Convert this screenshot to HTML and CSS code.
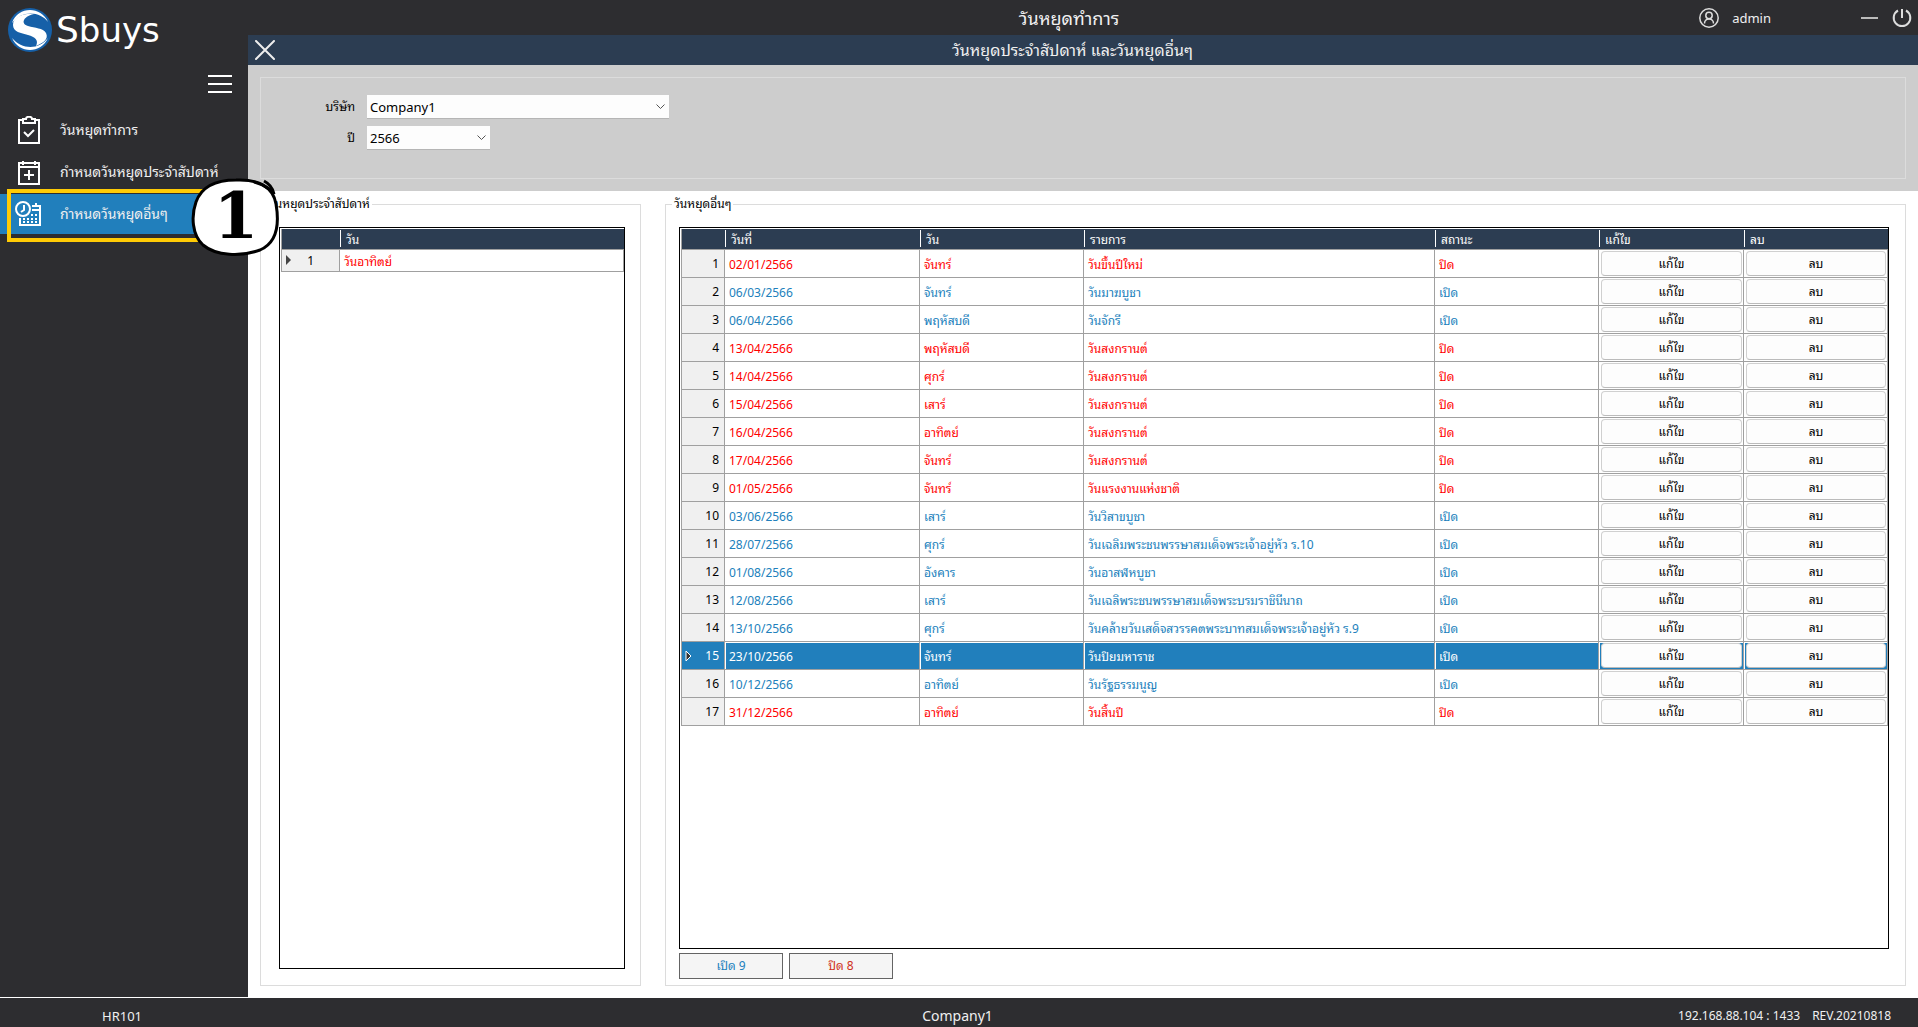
FILE: index.html
```html
<!DOCTYPE html>
<html lang="th">
<head>
<meta charset="utf-8">
<title>วันหยุดทำการ</title>
<link rel="stylesheet" href="styles.css">
</head>
<body>
<div class="app">
  <aside class="sidebar">
    <div class="logo">
      <svg class="logo-mark" viewBox="0 0 44 44" aria-hidden="true">
        <circle cx="22" cy="22" r="22" fill="#1660a8"/>
        <path d="M4 15C10 -2 33 -2 40 14C32 3 14 2 4 15Z" fill="#fff"/>
        <path d="M4 30C11 46 33 46 40 30C31 42 14 42 4 30Z" fill="#fff"/>
        <path d="M26 6C15 5 5 9 5 17C5 24 13 25 20 27C27 29 31 32 28 38C35 35 41 31 38 25C35 20 27 20 20 18C13 16 14 9 26 6Z" fill="#fff"/>
      </svg>
      <span class="wordmark"><span class="wordmark-cap">S</span>buys</span>
    </div>
    <button class="icon-button menu-toggle" aria-label="เมนู">
      <svg width="24" height="18" viewBox="0 0 24 18"><path d="M0 1H24M0 9H24M0 17H24" stroke="#fff" stroke-width="2"/></svg>
    </button>
    <nav class="nav">
      <a class="nav-item" href="#holidays">
        <svg class="nav-icon" viewBox="0 0 28 28" fill="none" stroke="#fff" stroke-width="2">
          <path d="M8 4H4V27H24V4H20M8 3V7H20V3H17C17 0 11 0 11 3Z"/><path d="M9 16L13 20L19 14"/>
        </svg>
        <span>วันหยุดทำการ</span>
      </a>
      <a class="nav-item" href="#weekly">
        <svg class="nav-icon" viewBox="0 0 28 28" fill="none" stroke="#fff" stroke-width="2">
          <path d="M4 5H24V26H4ZM4 9H24M8 3V7M20 3V7M14 12V22M9 17H19"/>
        </svg>
        <span>กำหนดวันหยุดประจำสัปดาห์</span>
      </a>
      <a class="nav-item nav-item-active" href="#others" aria-current="page">
        <svg class="nav-icon" viewBox="0 0 28 28" fill="none" stroke="#fff" stroke-width="2">
          <circle cx="8" cy="9" r="7"/><path d="M9 5V10L6 12"/><path d="M17 6H25V25H5V18M17 10H25M21 3V7"/>
          <path d="M16 15H23M8 19H23M8 22H23" stroke-dasharray="2 2"/>
        </svg>
        <span>กำหนดวันหยุดอื่นๆ</span>
      </a>
      <div class="callout">
        <svg class="callout-ring" viewBox="0 0 90 80" aria-hidden="true">
          <path d="M45 3C66 2 82 9 85 27C89 50 85 66 69 73C50 80 25 79 12 68C1 58 0 39 5 25C11 8 27 3 45 3Z" fill="#fff" stroke="#000" stroke-width="3"/>
          <path d="M73 4C79 7 82 12 83 17C78 10 70 7 63 5" fill="none" stroke="#000" stroke-width="3"/>
        </svg>
        <span class="callout-number">1</span>
      </div>
    </nav>
  </aside>

  <header class="topbar">
    <h1 class="topbar-title">วันหยุดทำการ</h1>
    <div class="topbar-tools">
      <svg width="20" height="20" viewBox="0 0 20 20" fill="none" stroke="#ddd" stroke-width="1.5">
        <circle cx="10" cy="10" r="9.2"/><circle cx="10" cy="7.500" r="3.200"/><path d="M5.500 15.500C5.500 9.500 14.500 9.500 14.500 15.500"/>
      </svg>
      <span class="user-name">admin</span>
      <button class="icon-button" aria-label="ย่อ"><svg width="18" height="20" viewBox="0 0 18 20"><path d="M0 10H17" stroke="#bbb" stroke-width="2"/></svg></button>
      <button class="icon-button" aria-label="ออก"><svg width="20" height="20" viewBox="0 0 20 20" fill="none" stroke="#ddd" stroke-width="2"><path d="M6 2.500A8.300 8.300 0 1 0 14 2.500M10 1V10"/></svg></button>
    </div>
  </header>

  <main class="page">
    <div class="page-bar">
      <button class="icon-button" aria-label="ปิดหน้าต่าง"><svg width="20" height="20" viewBox="0 0 20 20"><path d="M1 1L19 19M19 1L1 19" stroke="#eee" stroke-width="2" stroke-linecap="round"/></svg></button>
      <h2 class="page-title">วันหยุดประจำสัปดาห์ และวันหยุดอื่นๆ</h2>
    </div>

    <div class="filters">
      <div class="filter-box">
        <label class="filter-label" for="company">บริษัท</label>
        <select class="select select-wide" id="company"><option>Company1</option></select>
        <label class="filter-label" for="year">ปี</label>
        <select class="select select-narrow" id="year"><option>2566</option></select>
      </div>
    </div>

    <div class="panels">
      <fieldset class="panel panel-weekly">
        <legend class="legend">วันหยุดประจำสัปดาห์</legend>
        <div class="grid-frame">
          <table class="grid grid-weekly">
            <colgroup><col class="col-index-wide"><col></colgroup>
            <thead><tr><th></th><th>วัน</th></tr></thead>
            <tbody><tr class="closed"><td class="index index-marked"><svg class="marker" viewBox="0 0 7 12"><path d="M1 1L6 6L1 11Z" fill="#444"/></svg>1</td><td>วันอาทิตย์</td></tr></tbody>
          </table>
        </div>
      </fieldset>

      <fieldset class="panel panel-others">
        <legend class="legend">วันหยุดอื่นๆ</legend>
        <div class="grid-frame">
          <table class="grid">
            <colgroup><col class="col-index"><col class="col-date"><col class="col-day"><col><col class="col-status"><col class="col-edit"><col class="col-delete"></colgroup>
            <thead><tr><th></th><th>วันที่</th><th>วัน</th><th>รายการ</th><th>สถานะ</th><th>แก้ไข</th><th>ลบ</th></tr></thead>
            <tbody>
              <tr class="closed"><td class="index">1</td><td>02/01/2566</td><td>จันทร์</td><td>วันขึ้นปีใหม่</td><td>ปิด</td><td class="action"><button>แก้ไข</button></td><td class="action"><button>ลบ</button></td></tr>
              <tr class="open"><td class="index">2</td><td>06/03/2566</td><td>จันทร์</td><td>วันมาฆบูชา</td><td>เปิด</td><td class="action"><button>แก้ไข</button></td><td class="action"><button>ลบ</button></td></tr>
              <tr class="open"><td class="index">3</td><td>06/04/2566</td><td>พฤหัสบดี</td><td>วันจักรี</td><td>เปิด</td><td class="action"><button>แก้ไข</button></td><td class="action"><button>ลบ</button></td></tr>
              <tr class="closed"><td class="index">4</td><td>13/04/2566</td><td>พฤหัสบดี</td><td>วันสงกรานต์</td><td>ปิด</td><td class="action"><button>แก้ไข</button></td><td class="action"><button>ลบ</button></td></tr>
              <tr class="closed"><td class="index">5</td><td>14/04/2566</td><td>ศุกร์</td><td>วันสงกรานต์</td><td>ปิด</td><td class="action"><button>แก้ไข</button></td><td class="action"><button>ลบ</button></td></tr>
              <tr class="closed"><td class="index">6</td><td>15/04/2566</td><td>เสาร์</td><td>วันสงกรานต์</td><td>ปิด</td><td class="action"><button>แก้ไข</button></td><td class="action"><button>ลบ</button></td></tr>
              <tr class="closed"><td class="index">7</td><td>16/04/2566</td><td>อาทิตย์</td><td>วันสงกรานต์</td><td>ปิด</td><td class="action"><button>แก้ไข</button></td><td class="action"><button>ลบ</button></td></tr>
              <tr class="closed"><td class="index">8</td><td>17/04/2566</td><td>จันทร์</td><td>วันสงกรานต์</td><td>ปิด</td><td class="action"><button>แก้ไข</button></td><td class="action"><button>ลบ</button></td></tr>
              <tr class="closed"><td class="index">9</td><td>01/05/2566</td><td>จันทร์</td><td>วันแรงงานแห่งชาติ</td><td>ปิด</td><td class="action"><button>แก้ไข</button></td><td class="action"><button>ลบ</button></td></tr>
              <tr class="open"><td class="index">10</td><td>03/06/2566</td><td>เสาร์</td><td>วันวิสาขบูชา</td><td>เปิด</td><td class="action"><button>แก้ไข</button></td><td class="action"><button>ลบ</button></td></tr>
              <tr class="open"><td class="index">11</td><td>28/07/2566</td><td>ศุกร์</td><td>วันเฉลิมพระชนพรรษาสมเด็จพระเจ้าอยู่หัว ร.10</td><td>เปิด</td><td class="action"><button>แก้ไข</button></td><td class="action"><button>ลบ</button></td></tr>
              <tr class="open"><td class="index">12</td><td>01/08/2566</td><td>อังคาร</td><td>วันอาสฬหบูชา</td><td>เปิด</td><td class="action"><button>แก้ไข</button></td><td class="action"><button>ลบ</button></td></tr>
              <tr class="open"><td class="index">13</td><td>12/08/2566</td><td>เสาร์</td><td>วันเฉลิพระชนพรรษาสมเด็จพระบรมราชินีนาถ</td><td>เปิด</td><td class="action"><button>แก้ไข</button></td><td class="action"><button>ลบ</button></td></tr>
              <tr class="open"><td class="index">14</td><td>13/10/2566</td><td>ศุกร์</td><td>วันคล้ายวันเสด็จสวรรคตพระบาทสมเด็จพระเจ้าอยู่หัว ร.9</td><td>เปิด</td><td class="action"><button>แก้ไข</button></td><td class="action"><button>ลบ</button></td></tr>
              <tr class="selected"><td class="index"><svg class="marker" viewBox="0 0 7 12"><path d="M1 1L6 6L1 11Z" fill="#333" stroke="#fff"/></svg>15</td><td>23/10/2566</td><td>จันทร์</td><td>วันปิยมหาราช</td><td>เปิด</td><td class="action"><button>แก้ไข</button></td><td class="action"><button>ลบ</button></td></tr>
              <tr class="open"><td class="index">16</td><td>10/12/2566</td><td>อาทิตย์</td><td>วันรัฐธรรมนูญ</td><td>เปิด</td><td class="action"><button>แก้ไข</button></td><td class="action"><button>ลบ</button></td></tr>
              <tr class="closed"><td class="index">17</td><td>31/12/2566</td><td>อาทิตย์</td><td>วันสิ้นปี</td><td>ปิด</td><td class="action"><button>แก้ไข</button></td><td class="action"><button>ลบ</button></td></tr>
            </tbody>
          </table>
        </div>
        <div class="totals">
          <button class="total total-open">เปิด 9</button>
          <button class="total total-closed">ปิด 8</button>
        </div>
      </fieldset>
    </div>
  </main>

  <footer class="statusbar">
    <span class="status-code">HR101</span>
    <span class="status-company">Company1</span>
    <span class="status-info"><span>192.168.88.104 : 1433</span><span>REV.20210818</span></span>
  </footer>
</div>
</body>
</html>
```
FILE: styles.css
```css
* {
  box-sizing: border-box;
}

body {
  margin: 0;
  font-family: "Noto Sans", "Noto Sans Thai Looped", "Loma", "Garuda", "Waree", "Noto Sans Thai", sans-serif;
  font-size: 12px;
  line-height: 18px;
  color: #000;
  background: #2d2d30;
}

button,
select {
  font: inherit;
  color: inherit;
}

.app {
  display: grid;
  grid-template-columns: 248px minmax(0, 1fr);
  grid-template-rows: 35px minmax(0, 1fr) 30px;
  min-height: 100vh;
}

.icon-button {
  display: flex;
  padding: 0;
  border: 0;
  background: none;
}

/* Sidebar */
.sidebar {
  grid-row: 1 / 3;
  display: flex;
  flex-direction: column;
  color: #f0f0f0;
}

.logo {
  display: flex;
  align-items: center;
  gap: 4px;
  height: 60px;
  padding-left: 8px;
}

.logo-mark {
  width: 44px;
  height: 44px;
}

.wordmark {
  font-family: "DejaVu Sans", sans-serif;
  font-size: 34px;
  line-height: 40px;
  color: #fff;
}

.wordmark-cap {
  font-size: 36px;
}

.menu-toggle {
  align-self: flex-end;
  margin: 15px 16px 17px;
}

.nav {
  position: relative;
  display: flex;
  flex-direction: column;
  gap: 2px;
}

.nav-item {
  display: flex;
  align-items: center;
  gap: 17px;
  height: 40px;
  padding-left: 15px;
  font-size: 14px;
  color: inherit;
  text-decoration: none;
  white-space: nowrap;
}

.nav-item-active {
  background: #217fbc;
}

.nav-icon {
  flex: none;
  width: 28px;
  height: 28px;
}

/* Numbered marker laid over the active item */
.callout {
  position: absolute;
  top: 79px;
  left: 7px;
  width: 220px;
  height: 53px;
  border: 4px solid #ffcb05;
}

.callout-ring {
  position: absolute;
  top: -16px;
  right: -58px;
  width: 90px;
  height: 80px;
}

.callout-number {
  position: absolute;
  top: -16px;
  right: -58px;
  width: 90px;
  font-family: "DejaVu Serif", serif;
  font-size: 64px;
  font-weight: 700;
  line-height: 78px;
  text-align: center;
  color: #000;
}

/* Top bar */
.topbar {
  display: grid;
  grid-template-columns: minmax(0, 1fr) auto minmax(0, 1fr);
  align-items: center;
  padding-right: 6px;
  color: #f0f0f0;
}

.topbar-title {
  grid-column: 2;
  margin: 0 22px 0 0;
  font-size: 18px;
  font-weight: 400;
  line-height: 24px;
}

.topbar-tools {
  display: flex;
  justify-content: flex-end;
  align-items: center;
  gap: 13px;
}

.user-name {
  margin-right: 77px;
  font-size: 13px;
}

/* Page */
.page {
  display: flex;
  flex-direction: column;
  min-width: 0;
  background: #fff;
}

.page-bar {
  display: grid;
  grid-template-columns: 20px minmax(0, 1fr);
  align-items: center;
  height: 30px;
  padding: 0 48px 0 7px;
  color: #f0f0f0;
  background: #2c3d52;
}

.page-title {
  margin: 0;
  font-size: 16px;
  font-weight: 400;
  line-height: 24px;
  text-align: center;
}

.filters {
  padding: 12px;
  background: #cdcdcd;
}

.filter-box {
  display: grid;
  grid-template-columns: 94px minmax(0, 1fr);
  grid-auto-rows: 24px;
  align-items: center;
  gap: 7px 12px;
  padding: 17px 0 28px;
  border: 1px solid #dcdcdc;
}

.filter-label {
  text-align: right;
}

.select {
  height: 24px;
  padding: 0 3px;
  border: 0;
  border-bottom: 1px solid #b5b5b5;
  border-radius: 0;
  appearance: none;
  font-size: 13px;
  background: #fdfdfd url("data:image/svg+xml,%3Csvg xmlns='http://www.w3.org/2000/svg' width='9' height='6'%3E%3Cpath d='M.5.5l4 4 4-4' fill='none' stroke='%23555'/%3E%3C/svg%3E") no-repeat right 4px center;
}

.select-wide {
  width: 302px;
}

.select-narrow {
  width: 123px;
}

/* Panels */
.panels {
  flex: 1;
  display: grid;
  grid-template-columns: minmax(0, 381fr) minmax(0, 1241fr);
  gap: 24px;
  padding: 4px 12px 11px;
}

.panel {
  display: flex;
  flex-direction: column;
  gap: 4px;
  min-width: 0;
  margin: 0;
  border: 1px solid #dcdcdc;
}

.panel-weekly {
  padding: 14px 15px 16px 6px;
}

.panel-weekly .grid-frame {
  margin-left: 12px;
}

.panel-others {
  padding: 14px 16px 6px 6px;
}

.panel-others .grid-frame,
.panel-others .totals {
  margin-left: 7px;
}

.legend {
  padding: 0 2px;
}

.grid-frame {
  flex: 1;
  padding: 1px 0 1px 1px;
  border: 1px solid #000;
}

.grid {
  width: 100%;
  table-layout: fixed;
  border-collapse: separate;
  border-spacing: 0;
  border-left: 1px solid #a0a0a0;
}

.grid th {
  height: 21px;
  padding: 2px 6px 0;
  border-bottom: 1px solid #a0a0a0;
  font-weight: 400;
  line-height: 18px;
  text-align: left;
  color: #fff;
  background: #2c3d52;
}

.grid th + th {
  background: linear-gradient(#fff, #fff) no-repeat 0 1px / 1px 17px #2c3d52;
}

.grid td {
  height: 28px;
  padding: 3px 4px 0;
  border-right: 1px solid #a0a0a0;
  border-bottom: 1px solid #a0a0a0;
  white-space: nowrap;
}

.grid-weekly td {
  height: 22px;
}

.col-index {
  width: 43px;
}

.col-index-wide {
  width: 58px;
}

.col-date {
  width: 195px;
}

.col-day,
.col-status {
  width: 164px;
}

.col-edit {
  width: 145px;
}

.col-delete {
  width: 144px;
}

.grid .index {
  position: relative;
  padding: 1px 5px 0 0;
  text-align: right;
  color: #000;
  background: #f0f0f0;
}

.grid .index-marked {
  padding-right: 25px;
}

.marker {
  position: absolute;
  top: 8px;
  left: 3px;
  width: 7px;
  height: 12px;
}

.grid-weekly .marker {
  top: 4px;
}

.closed {
  color: #f00;
}

.open {
  color: #217fbc;
}

.selected,
.grid .selected .index {
  color: #fff;
  background: #217fbc;
}

.grid .selected td + td {
  box-shadow: inset 1px 1px #fff;
}

.grid .action {
  padding: 1px 1px 1px 2px;
}

.action button {
  display: block;
  width: 100%;
  height: 25px;
  padding: 0;
  border: 1px solid #d0d0d0;
  border-bottom-color: #bbb;
  border-radius: 4px;
  color: #000;
  background: #fdfdfd;
}

.totals {
  display: flex;
  gap: 6px;
}

.total {
  width: 104px;
  height: 26px;
  padding: 0;
  border: 1px solid #646464;
  background: #f5f5f5;
}

.total-open {
  color: #217fbc;
}

.total-closed {
  color: #d03020;
}

/* Status bar */
.statusbar {
  grid-column: 1 / 3;
  display: grid;
  grid-template-columns: minmax(0, 1fr) auto minmax(0, 1fr);
  align-items: center;
  padding: 6px 27px 0 102px;
  border-top: 1px solid #fff;
  color: #f0f0f0;
}

.status-code {
  font-size: 13px;
}

.status-company {
  padding-right: 78px;
  font-size: 14px;
}

.status-info {
  display: flex;
  justify-content: flex-end;
  gap: 12px;
}
```
